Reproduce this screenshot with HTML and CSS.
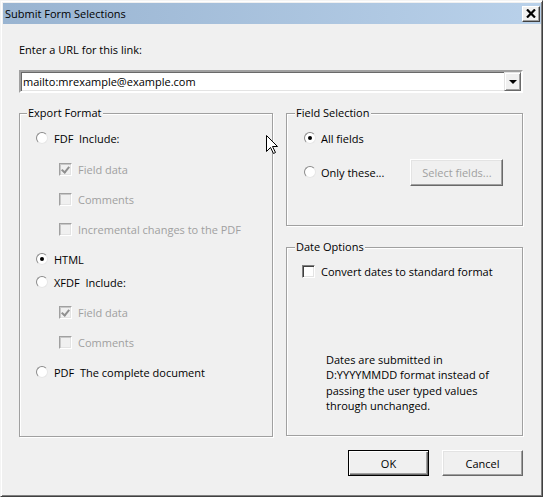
FILE: index.html
```html
<!DOCTYPE html>
<html>
<head>
    <title>Submit Form Selections</title>
    <link rel="stylesheet" href="styles.css">
</head>

<body>
    <div class="window">
        <div class="title-bar">
            <span class="title">Submit Form Selections</span>
            <span class="close-btn">
                <svg width="10" height="9" viewBox="0 0 10 9"><path d="M1 0.5 L9 8.5 M9 0.5 L1 8.5" stroke="#000" stroke-width="2.2"/></svg>
            </span>
        </div>

        <div class="dialog">
            <div class="url-label">Enter a URL for this link:</div>
            <div class="combo">
                <span class="combo-text">mailto:mrexample@example.com</span>
                <span class="combo-arrow"><span class="tri"></span></span>
            </div>

            <div class="groups">
                <fieldset class="group export">
                    <legend>Export Format</legend>
                    <div class="row"><span class="radio"></span><span>FDF&nbsp; Include:</span></div>
                    <div class="row sub first"><span class="check checked disabled"></span><span class="dim">Field data</span></div>
                    <div class="row sub"><span class="check disabled"></span><span class="dim">Comments</span></div>
                    <div class="row sub"><span class="check disabled"></span><span class="dim">Incremental changes to the PDF</span></div>
                    <div class="row"><span class="radio on"></span><span>HTML</span></div>
                    <div class="row close"><span class="radio"></span><span>XFDF&nbsp; Include:</span></div>
                    <div class="row sub"><span class="check checked disabled"></span><span class="dim">Field data</span></div>
                    <div class="row sub"><span class="check disabled"></span><span class="dim">Comments</span></div>
                    <div class="row"><span class="radio"></span><span>PDF&nbsp; The complete document</span></div>
                </fieldset>

                <div class="right-col">
                    <fieldset class="group fields">
                        <legend>Field Selection</legend>
                        <div class="row"><span class="radio on"></span><span>All fields</span></div>
                        <div class="row only">
                            <span class="radio"></span><span>Only these...</span>
                            <span class="btn disabled select-btn">Select fields...</span>
                        </div>
                    </fieldset>

                    <fieldset class="group dates">
                        <legend>Date Options</legend>
                        <div class="row"><span class="check"></span><span>Convert dates to standard format</span></div>
                        <p class="note">Dates are submitted in<br>D:YYYYMMDD format instead of<br>passing the user typed values<br>through unchanged.</p>
                    </fieldset>
                </div>
            </div>

            <div class="buttons">
                <span class="btn default">OK</span>
                <span class="btn">Cancel</span>
            </div>
        </div>

        <!-- mouse pointer over the dialog -->
        <svg class="cursor" width="13" height="20" viewBox="0 0 13 20">
            <path d="M0.5 0.5 L0.5 16.5 L4.5 12.5 L7.5 18.5 L9.5 17.5 L6.5 11.5 L11.5 11.5 Z" fill="#fff" stroke="#000" stroke-width="1"/>
        </svg>
    </div>
</body>
</html>
```

FILE: styles.css
```css
* {
    box-sizing: border-box;
}

body {
    margin: 0;
    background-color: #f0f0f0;
    font-family: "Open Sans", "DejaVu Sans", sans-serif;
    font-size: 11px;
    color: #000;
}

.window {
    position: relative;
    width: 543px;
    height: 497px;
    border: 1px solid;
    border-color: #f4f4f4 #404040 #404040 #f4f4f4;
    box-shadow: inset 1px 1px #fff, inset -1px -1px #808080;
    padding: 2px 1px 0 2px;
}

.title-bar {
    height: 21px;
    display: flex;
    align-items: center;
    justify-content: space-between;
    padding: 0 1px 0 2px;
    background: linear-gradient(to right, #99b4d1, #b9d1ea);
}

.close-btn {
    width: 18px;
    height: 16px;
    display: flex;
    align-items: center;
    justify-content: center;
    background-color: #f0f0f0;
    border: 1px solid;
    border-color: #fff #404040 #404040 #fff;
    box-shadow: inset -1px -1px #a0a0a0;
}

.dialog {
    padding: 18px 18px 0 16px;
}

.url-label {
    line-height: 16px;
}

.combo {
    margin-top: 12px;
    height: 23px;
    display: flex;
    align-items: center;
    background-color: #fff;
    border: 2px solid;
    border-color: #a0a0a0 #fff #fff #a0a0a0;
    box-shadow: inset 1px 1px #696969, inset -1px -1px #e3e3e3;
}

.combo-text {
    padding-left: 2px;
    flex: 1;
}

.combo-arrow {
    width: 17px;
    height: 19px;
    display: flex;
    align-items: center;
    justify-content: center;
    background-color: #f0f0f0;
    border: 1px solid;
    border-color: #e3e3e3 #696969 #696969 #e3e3e3;
    box-shadow: inset 1px 1px #fff, inset -1px -1px #a0a0a0;
}

.tri {
    width: 0;
    height: 0;
    border-left: 4px solid transparent;
    border-right: 4px solid transparent;
    border-top: 4px solid #000;
}

.groups {
    display: flex;
    gap: 13px;
    margin-top: 12px;
}

.group {
    margin: 0;
    border: 1px solid #a0a0a0;
    box-shadow: inset 1px 1px #fff, 1px 1px #fff;
}

.group legend {
    padding: 0 1px;
    margin-left: -9px;
    line-height: 16px;
    background-color: #f0f0f0;
}

.export {
    width: 254px;
    height: 332px;
    padding: 9px 10px 0 16px;
    display: flex;
    flex-direction: column;
    gap: 14px;
}

.right-col {
    width: 237px;
    display: flex;
    flex-direction: column;
    gap: 13px;
}

.fields {
    height: 121px;
    padding: 9px 10px 0 17px;
}

.fields legend {
    margin-left: -9px;
}

.dates {
    height: 197px;
    padding: 8px 10px 0 15px;
}

.dates legend {
    margin-left: -7px;
}

.row {
    height: 16px;
    display: flex;
    align-items: center;
    gap: 6px;
    white-space: nowrap;
}

.row.sub {
    padding-left: 23px;
}

.row.sub.first {
    margin-top: 1px;
}

.row.close {
    margin-top: -7px;
}

.dim {
    color: #a0a0a0;
}

.radio {
    position: relative;
    width: 12px;
    height: 12px;
    border-radius: 50%;
    background-color: #fff;
    border: 1px solid;
    border-color: #8a8a8a #e6e6e6 #e6e6e6 #8a8a8a;
}

.radio.on::after {
    content: "";
    position: absolute;
    left: 3px;
    top: 3px;
    width: 4px;
    height: 4px;
    border-radius: 50%;
    background-color: #000;
}

.check {
    position: relative;
    width: 13px;
    height: 13px;
    background-color: #fff;
    border: 1px solid;
    border-color: #808080 #fff #fff #808080;
    box-shadow: inset 1px 1px #404040, inset -1px -1px #e3e3e3;
}

.check.disabled {
    background-color: #f0f0f0;
    border-color: #a0a0a0 #fff #fff #a0a0a0;
    box-shadow: inset 1px 1px #c8c8c8, inset -1px -1px #e3e3e3;
}

.check.checked::after {
    content: "";
    position: absolute;
    left: 3px;
    top: 1px;
    width: 3px;
    height: 6px;
    border: solid #909090;
    border-width: 0 2px 2px 0;
    transform: rotate(40deg);
}

.fields .row {
    gap: 5px;
}

.fields .row.only {
    margin-top: 18px;
}

.btn {
    display: inline-flex;
    align-items: center;
    justify-content: center;
    width: 81px;
    height: 26px;
    background-color: #f0f0f0;
    border: 1px solid;
    border-color: #fff #696969 #696969 #fff;
    box-shadow: inset -1px -1px #a0a0a0, inset 1px 1px #e3e3e3;
}

.btn.default {
    border: 1px solid #000;
    box-shadow: inset 1px 1px #fff, inset -1px -1px #696969, inset -2px -2px #a0a0a0;
}

.btn.disabled {
    color: #a0a0a0;
}

.select-btn {
    width: 93px;
    height: 27px;
    margin-left: 21px;
}

.note {
    margin: 73px 0 0 24px;
    line-height: 15.3px;
}

.buttons {
    display: flex;
    justify-content: flex-end;
    gap: 13px;
    margin-top: 13px;
}

.cursor {
    position: absolute;
    left: 265px;
    top: 134px;
}
```
